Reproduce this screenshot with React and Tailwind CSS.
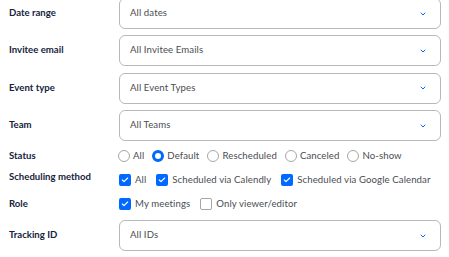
import { ChevronDown, Check } from 'lucide-react';

const SelectRow = ({ label, value, className = '' }) => (
  <div className={`flex items-center h-[31px] ${className}`}>
    <div className="w-[110px] shrink-0 text-[9.6px] font-bold text-[#15233d]">{label}</div>
    <div className="flex-1 h-full flex items-center justify-between pl-[10px] pr-[13px] border border-[#b8b8b8] rounded-[6px] bg-white">
      <span className="text-[9.6px] text-[#4a4d52] tracking-[0.1px]">{value}</span>
      <ChevronDown size={8} strokeWidth={3} className="text-[#0069ff]" />
    </div>
  </div>
);

const Radio = ({ label, checked }) => (
  <label className="flex items-center gap-[3px]">
    <span
      className={
        checked
          ? 'w-[12px] h-[12px] rounded-full border-[3.5px] border-[#0069ff] bg-white'
          : 'w-[12px] h-[12px] rounded-full border border-[#a6a6a6] bg-white'
      }
    />
    <span>{label}</span>
  </label>
);

const Box = ({ label, checked }) => (
  <label className="flex items-center gap-[4px]">
    {checked ? (
      <span className="w-[12px] h-[12px] rounded-[2px] bg-[#0069ff] flex items-center justify-center">
        <Check size={8} strokeWidth={3.5} className="text-white" />
      </span>
    ) : (
      <span className="w-[12px] h-[12px] rounded-[2px] border border-[#a6a6a6] bg-white" />
    )}
    <span>{label}</span>
  </label>
);

const ChoiceRow = ({ label, children, className = '', labelClass = '' }) => (
  <div className={`flex items-center ${className}`}>
    <div className={`w-[110px] shrink-0 text-[9.6px] font-bold text-[#15233d] ${labelClass}`}>{label}</div>
    <div className="flex items-center text-[9.6px] text-[#4a4d52] tracking-[0.1px]">{children}</div>
  </div>
);

export default function App() {
  return (
    <div className="w-[449px] h-[257px] overflow-hidden bg-white font-['Lato',sans-serif]">
      <div className="pl-[9px] pr-[8px] mt-[-2px]">
        <SelectRow label="Date range" value="All dates" />
        <SelectRow label="Invitee email" value="All Invitee Emails" className="mt-[6px]" />
        <SelectRow label="Event type" value="All Event Types" className="mt-[6.5px]" />
        <SelectRow label="Team" value="All Teams" className="mt-[6.5px]" />

        <ChoiceRow label="Status" className="h-[14px] mt-[8px]">
          <div className="flex items-center gap-[8px] -ml-[1px]">
            <Radio label="All" />
            <Radio label="Default" checked />
            <Radio label="Rescheduled" />
            <Radio label="Canceled" />
            <Radio label="No-show" />
          </div>
        </ChoiceRow>

        <ChoiceRow label="Scheduling method" className="h-[14px] mt-[10px]" labelClass="-mt-[6px]">
          <div className="flex items-center gap-[10px]">
            <Box label="All" checked />
            <Box label="Scheduled via Calendly" checked />
            <Box label="Scheduled via Google Calendar" checked />
          </div>
        </ChoiceRow>

        <ChoiceRow label="Role" className="h-[14px] mt-[10px]">
          <div className="flex items-center gap-[10px]">
            <Box label="My meetings" checked />
            <Box label="Only viewer/editor" />
          </div>
        </ChoiceRow>

        <SelectRow label="Tracking ID" value="All IDs" className="mt-[9px]" />
      </div>
    </div>
  );
}
